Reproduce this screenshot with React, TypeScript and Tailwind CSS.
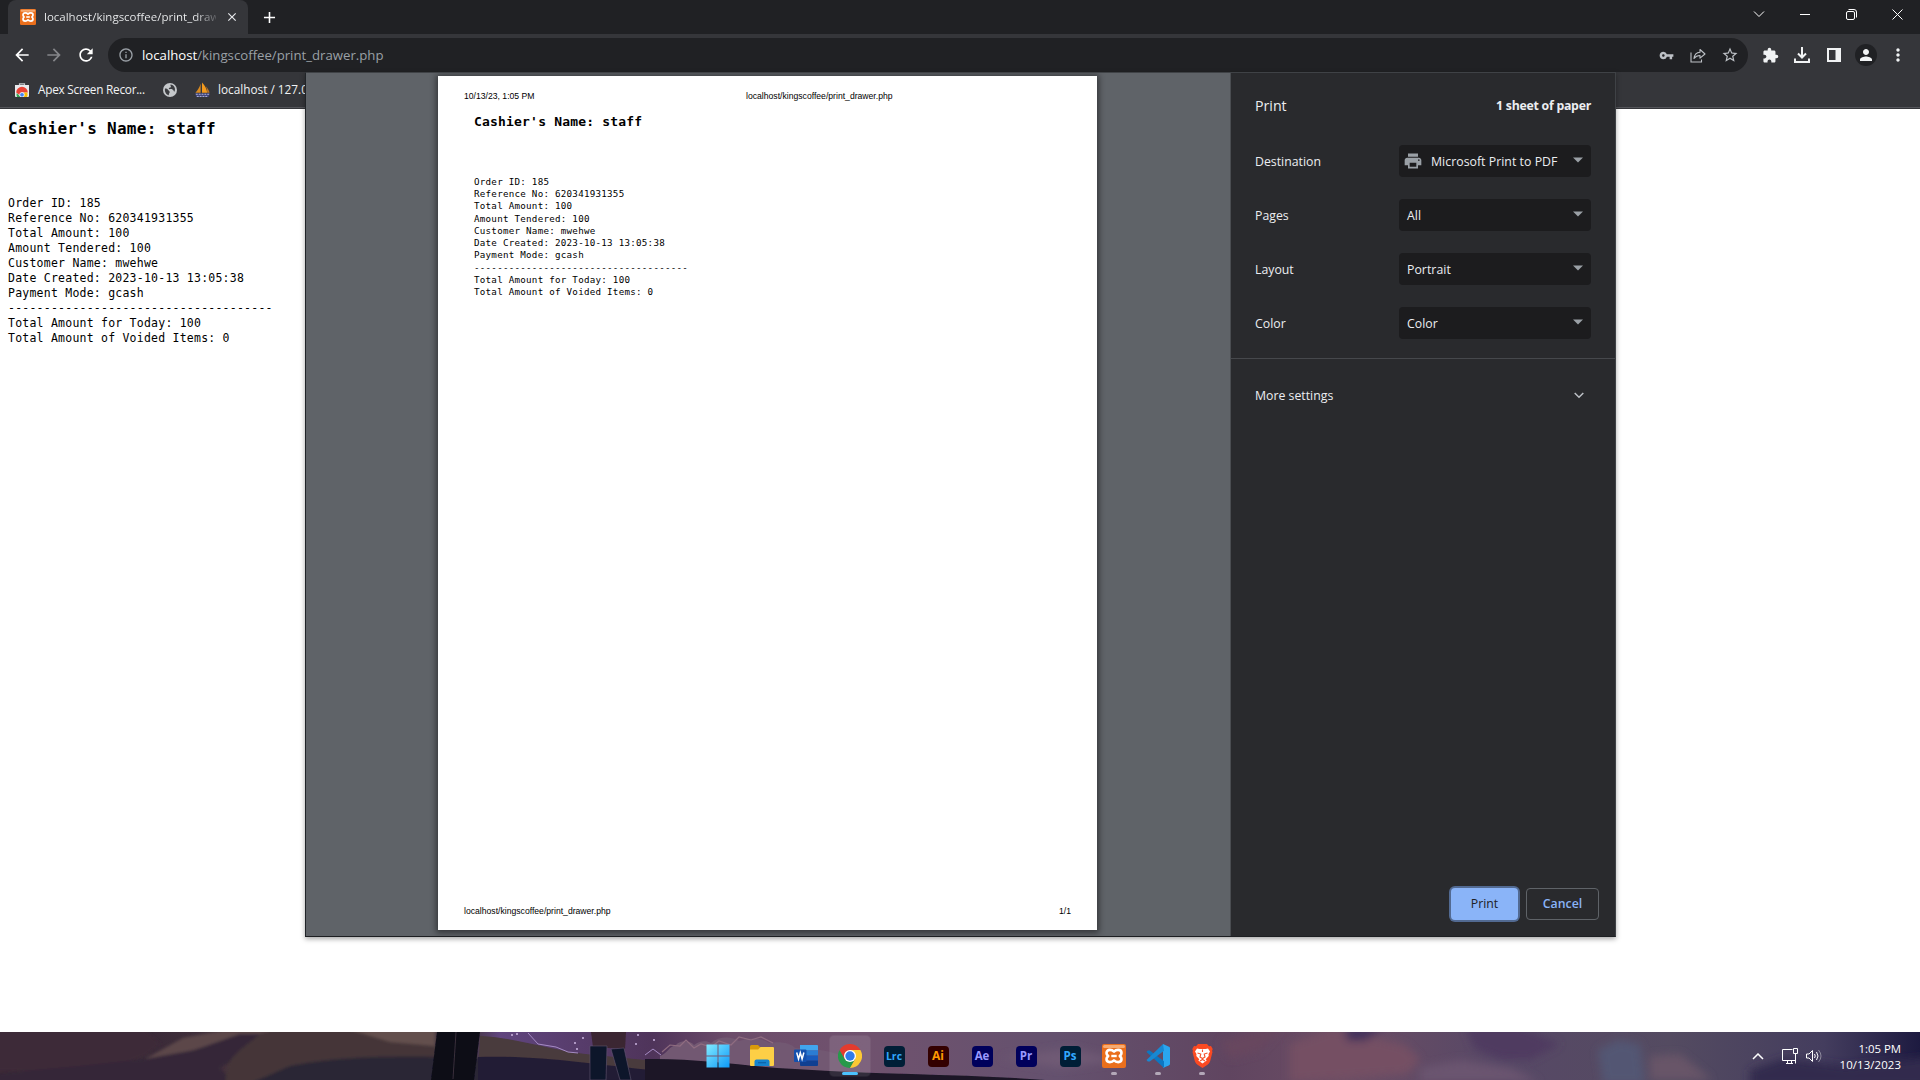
import React from "react";
import {
  MdArrowBack,
  MdArrowForward,
  MdRefresh,
  MdInfoOutline,
  MdVpnKey,
  MdStarBorder,
  MdExtension,
  MdPerson,
  MdMoreVert,
  MdPrint,
  MdAdd,
  MdClose,
  MdExpandMore,
} from "react-icons/md";

const receipt = [
  "Order ID: 185",
  "Reference No: 620341931355",
  "Total Amount: 100",
  "Amount Tendered: 100",
  "Customer Name: mwehwe",
  "Date Created: 2023-10-13 13:05:38",
  "Payment Mode: gcash",
  "-------------------------------------",
  "Total Amount for Today: 100",
  "Total Amount of Voided Items: 0",
];

function XamppIcon({ size }: { size: number }) {
  return (
    <svg width={size} height={size} viewBox="0 0 24 24">
      <rect width="24" height="24" rx="2" fill="#ea6f1c" />
      <rect x="1" y="1" width="22" height="3" rx="1.5" fill="#f6ab72" />
      <path
        d="M12 7.600C10.800 6.300 9.600 5.900 7.800 5.900 5.800 5.900 4.500 7 4.500 8.900c0 1.600.9 2.300 1.700 3.100-.8.8-1.700 1.500-1.700 3.100 0 1.900 1.300 3 3.300 3 1.800 0 3-.4 4.200-1.700 1.200 1.300 2.400 1.700 4.200 1.700 2 0 3.300-1.100 3.300-3 0-1.600-.9-2.300-1.700-3.100.8-.8 1.700-1.500 1.700-3.100 0-1.900-1.300-3-3.300-3-1.800 0-3 .4-4.200 1.700Z"
        fill="none"
        stroke="#fff"
        strokeWidth="2.600"
        strokeLinejoin="round"
      />
      <path d="M9.300 12h5.400" stroke="#fff" strokeWidth="2.400" />
    </svg>
  );
}

function TabStrip() {
  return (
    <div className="flex h-[34px] items-stretch bg-[#202124]">
      <div className="relative ml-2 flex w-[240px] items-center rounded-t-lg bg-[#35363a] pl-3 pr-2">
        <XamppIcon size={16} />
        <div className="ml-2 w-[172px] whitespace-nowrap bg-gradient-to-r from-[#f1f3f4] from-88% to-[#5a5b5f] bg-clip-text text-[11.500px] text-transparent">
          localhost/kingscoffee/print_draw
        </div>
        <MdClose className="ml-[9px]" color="#e8eaed" size={14} />
      </div>
      <div className="flex w-[43px] items-center justify-center">
        <MdAdd size={19} color="#fff" />
      </div>
      <div className="ml-auto flex h-7 items-center text-white">
        <div className="flex w-[46px] justify-center">
          <svg width="12" height="8" viewBox="0 0 12 8">
            <path d="M1 1.500l5 5 5-5" fill="none" stroke="currentColor" />
          </svg>
        </div>
        <div className="flex w-[46px] justify-center">
          <span className="h-px w-[10px] bg-white" />
        </div>
        <div className="flex w-[46px] justify-center">
          <svg width="11" height="11" viewBox="0 0 11 11" fill="none" stroke="currentColor">
            <rect x=".5" y="2.500" width="8" height="8" rx="1.500" />
            <path d="M2.500.5h5.500a2.500 2.500 0 0 1 2.500 2.500v5.500" />
          </svg>
        </div>
        <div className="flex w-[46px] justify-center">
          <svg width="11" height="11" viewBox="0 0 11 11" stroke="currentColor">
            <path d="M.5.5l10 10M10.500.5l-10 10" />
          </svg>
        </div>
      </div>
    </div>
  );
}

function Slot({ children }: { children: React.ReactNode }) {
  return <div className="flex w-8 shrink-0 items-center justify-center">{children}</div>;
}

function Toolbar() {
  return (
    <div className="flex h-[38px] items-end px-1.5">
      <div className="flex h-[34px] items-center text-white">
        <Slot>
          <MdArrowBack size={20} />
        </Slot>
        <Slot>
          <MdArrowForward size={20} color="#85868a" />
        </Slot>
        <Slot>
          <MdRefresh size={20} />
        </Slot>
      </div>
      <div className="ml-1.5 flex h-[34px] w-[1640px] items-center rounded-full bg-[#202124] pl-2.5 pr-0.5 text-[#bdc1c6]">
        <MdInfoOutline size={16} color="#9aa0a6" />
        <div className="ml-2 flex-1 pt-px text-[13.200px] text-[#9aa0a6]">
          <span className="text-white">localhost</span>/kingscoffee/print_drawer.php
        </div>
        <Slot>
          <MdVpnKey size={15} />
        </Slot>
        <Slot>
          <svg width="16" height="15" viewBox="0 0 16 15" fill="none" stroke="currentColor" strokeWidth="1.100">
            <path d="M1 4.500V14h10.500v-2.500" />
            <path d="M4 10.500C4.500 6.500 6.500 4.500 10 4.300V1.500L15 6l-5 4.200V7.500C7.500 7.500 5.500 8.500 4 10.500Z" strokeLinejoin="round" />
          </svg>
        </Slot>
        <Slot>
          <MdStarBorder size={18} />
        </Slot>
      </div>
      <div className="ml-1.5 flex h-[34px] items-center text-[#f1f3f4]">
        <Slot>
          <MdExtension size={17} />
        </Slot>
        <Slot>
          <svg width="16" height="16" viewBox="0 0 16 16" fill="none" stroke="currentColor" strokeWidth="2">
            <path d="M8 0v10M4 6.500l4 4 4-4M1 11.500V15h14v-3.500" />
          </svg>
        </Slot>
        <Slot>
          <svg width="14" height="14" viewBox="0 0 14 14">
            <path d="M1 1h12v12H1z" fill="none" stroke="currentColor" strokeWidth="2" />
            <path d="M8.500 0H14v14H8.500z" fill="currentColor" />
          </svg>
        </Slot>
        <Slot>
          <div className="flex size-[22px] items-center justify-center rounded-full bg-[#202124]">
            <MdPerson size={18} />
          </div>
        </Slot>
        <Slot>
          <MdMoreVert size={20} />
        </Slot>
      </div>
    </div>
  );
}

function Bookmarks() {
  return (
    <div className="flex h-[36px] items-center border-b border-[#54555a] pl-[15px] text-[11.800px] text-[#f1f3f4]">
      <svg width="14" height="14" viewBox="0 0 14 14">
        <path d="M4.500 3V.8h5V3" fill="none" stroke="#c4c7ca" strokeWidth="1.200" />
        <path d="M0 2h14v11a1 1 0 0 1-1 1H1a1 1 0 0 1-1-1z" fill="#e8eaed" />
        <path d="M2 14a5.500 5.500 0 0 1-.2-4l4 4z" fill="#34a853" />
        <path d="M1.200 9.500A5.800 5.800 0 0 1 12.800 9.500H7L4.700 12z" fill="#ea4335" />
        <path d="M12.300 9.500a6 6 0 0 1-.3 4.500H7l2.400-4.500z" fill="#fbbc04" />
        <circle cx="7" cy="11.800" r="2.300" fill="#4285f4" stroke="#fff" strokeWidth=".8" />
      </svg>
      <span className="ml-[9px] w-[110px] whitespace-nowrap pt-px tracking-[-0.250px]">Apex Screen Recor...</span>
      <svg className="ml-[15px]" width="14" height="14" viewBox="0 0 14 14">
        <circle cx="7" cy="7" r="7" fill="#c4c7ca" />
        <path d="M2 5.500c1.500 0 2.500.3 3.200 1.500.6 1 1.500 1 1.500 2s-1 1.200-.9 3.200C3.500 12 1.300 9 2 5.500z" fill="#3c3d41" />
        <path d="M7.500 1.500c-.5 1.500 1 1.800.3 2.800-.8.700-2 .3-2 1.500 1.200.8 3 .2 4.200 1 .8.700.5 1.700 1.500 1.900C13 5 11 2 7.500 1.500z" fill="#3c3d41" />
      </svg>
      <svg className="ml-[17px]" width="17" height="16" viewBox="0 0 18 16">
        <path d="M7 1v10H1.500C4 8 6 5 7 1z" fill="#d98a21" />
        <path d="M8.500 0c3 3 5 7 5.500 11H8.500z" fill="#f39a1d" />
        <path d="M12.500 4c2 2 3.500 4.500 4 7H14c0-2-.5-5-1.500-7z" fill="#b9752a" />
        <path d="M1 11.500h16l-1.500 4H2.500z" fill="#3d4276" />
        <path d="M2 12.500h14M3 14.800h12" stroke="#b8bbe0" strokeWidth="1" strokeDasharray="2 1" />
      </svg>
      <span className="ml-[7px] whitespace-nowrap pt-px">localhost / 127.0</span>
    </div>
  );
}

const options = [
  { label: "Destination", value: "Microsoft Print to PDF", printer: true },
  { label: "Pages", value: "All", printer: false },
  { label: "Layout", value: "Portrait", printer: false },
  { label: "Color", value: "Color", printer: false },
];

function PrintDialog() {
  return (
    <div className="absolute left-[305px] top-[72px] flex h-[865px] w-[1311px] border border-[#3f4246] border-b-[#1d1f22] border-l-[#202428] bg-[#292a2d] shadow-[0_2px_5px_rgba(0,0,0,0.35)]">
      <div className="w-[925px] overflow-hidden border-r border-[#4a4d51] bg-[#5f6368] pl-[132px] pt-[3px]">
        <div className="flex h-[854px] w-[659px] flex-col bg-white px-[26px] text-black shadow-[0_1px_6px_2px_rgba(0,0,0,0.45)]">
          <div className="mt-[15px] flex h-[10px] items-center whitespace-nowrap font-['Liberation_Sans'] text-[8.650px] leading-[10px]">
            <span className="w-[282px]">10/13/23, 1:05 PM</span>
            <span>localhost/kingscoffee/print_drawer.php</span>
          </div>
          <div className="pl-[10px] font-['DejaVu_Sans_Mono']">
            <div className="mt-[13px] h-[16px] text-[13px] font-bold leading-[16px] tracking-[0.190px]">
              Cashier&apos;s Name: staff
            </div>
            <div className="mt-[46px] whitespace-pre text-[9.200px] leading-[12.220px] tracking-[0.255px]">
              {receipt.map((line) => (
                <div key={line}>{line}</div>
              ))}
            </div>
          </div>
          <div className="mb-[14px] mt-auto flex h-[10px] items-center justify-between font-['Liberation_Sans'] text-[8.650px] leading-[10px]">
            <span>localhost/kingscoffee/print_drawer.php</span>
            <span>1/1</span>
          </div>
        </div>
      </div>
      <div className="flex w-[384px] flex-col text-[12.300px] text-[#eceef1]">
        <div className="flex h-[61px] items-center justify-between px-6 pt-[5px]">
          <span className="text-[14.200px]">Print</span>
          <span className="font-bold tracking-[-0.250px]">1 sheet of paper</span>
        </div>
        {options.map((o) => (
          <div key={o.label} className="flex h-[54px] items-center justify-between px-6">
            <span className="pt-[2px]">{o.label}</span>
            <div className="flex h-8 w-[192px] items-center rounded bg-[#1c1c1e] pl-2 pr-2">
              {o.printer && <MdPrint className="-ml-1 mr-2 shrink-0" size={20} color="#9aa0a6" />}
              <span className="whitespace-nowrap pt-[2px] tracking-[0.030px]">{o.value}</span>
              <svg className="mb-[2px] ml-auto shrink-0" width="10" height="6" viewBox="0 0 10 6">
                <path d="M0 .5h10L5 5.500z" fill="#9aa0a6" />
              </svg>
            </div>
          </div>
        ))}
        <div className="mt-[8px] flex h-[73px] items-center justify-between border-t border-[#46484c] px-6">
          <span className="pt-[2px]">More settings</span>
          <svg className="mr-[7px]" width="10" height="7" viewBox="0 0 10 7">
            <path d="M.7 1l4.300 4.300L9.300 1" fill="none" stroke="#bdc1c6" strokeWidth="1.500" />
          </svg>
        </div>
        <div className="mb-4 mr-4 mt-auto flex justify-end gap-2">
          <div className="flex h-8 w-[67px] items-center justify-center rounded bg-[#8ab4f8] pt-px font-medium text-[#202124] ring-2 ring-[#526a92]">
            Print
          </div>
          <div className="flex h-8 w-[73px] items-center justify-center rounded border border-[#5f6368] pt-px font-semibold text-[#8ab4f8]">
            Cancel
          </div>
        </div>
      </div>
    </div>
  );
}

function Wallpaper() {
  return (
    <svg className="absolute inset-0" width="1920" height="48" viewBox="0 0 1920 48">
      <defs>
        <linearGradient id="sky" x1="0" x2="1920" y1="0" y2="0" gradientUnits="userSpaceOnUse">
          <stop offset="0" stopColor="#3b2734" />
          <stop offset=".08" stopColor="#3a2a38" />
          <stop offset=".15" stopColor="#4b383e" />
          <stop offset=".245" stopColor="#43363e" />
          <stop offset=".26" stopColor="#60457e" />
          <stop offset=".34" stopColor="#4f345a" />
          <stop offset=".38" stopColor="#6c4c6a" />
          <stop offset=".45" stopColor="#70526e" />
          <stop offset=".55" stopColor="#64516e" />
          <stop offset=".64" stopColor="#604560" />
          <stop offset=".7" stopColor="#6b4d64" />
          <stop offset=".78" stopColor="#574866" />
          <stop offset=".87" stopColor="#544b61" />
          <stop offset=".95" stopColor="#443d5e" />
          <stop offset="1" stopColor="#1d1a40" />
        </linearGradient>
        <filter id="soft" x="-20%" y="-80%" width="140%" height="260%">
          <feGaussianBlur stdDeviation="4" />
        </filter>
        <filter id="hills" x="-5%" y="-20%" width="110%" height="140%">
          <feGaussianBlur stdDeviation="1.800" />
        </filter>
        <filter id="fine" x="-5%" y="-20%" width="110%" height="140%">
          <feGaussianBlur stdDeviation=".6" />
        </filter>
      </defs>
      <rect width="1920" height="48" fill="url(#sky)" />
      <g filter="url(#hills)">
        <path d="M-10-10H135l26 22-16 12-45 15H-10z" fill="#3d2938" />
        <path d="M145 27l38-21 42-8h50L200 16l-30 10z" fill="#5c474a" />
        <path d="M145 27l50-9 45-16h40l-35 18-25 16 20 22H-10v-16l90-8z" fill="#342737" />
        <path d="M262 1c35-8 75-8 95-4l80 18v40H225c3-26 0-27 37-54z" fill="#453639" />
        <path d="M345-4h90v18l-45-4z" fill="#64504d" />
        <path d="M290 34c80-16 190-10 420 6v20H230z" fill="#2a2535" />
      </g>
      <g filter="url(#fine)">
        <path d="M480 4c35 1 75 16 115 19l80 8v12H478z" fill="#493a3d" />
        <path d="M478 25c60-2 110 7 182 14v9H478z" fill="#241e36" />
        <path d="M528 1l10 11 18 3 12 5 10 1M645 23l8-6 8 6" stroke="#a58bc4" strokeWidth="1" fill="none" />
        <g fill="#cbb5df">
          <circle cx="512" cy="3" r="1" />
          <circle cx="517" cy="2" r="1" />
          <circle cx="575" cy="11" r="1" />
          <circle cx="583" cy="6" r="1" />
          <circle cx="638" cy="3" r="1" />
          <circle cx="636" cy="12" r="1" />
          <circle cx="654" cy="8" r="1" />
          <circle cx="577" cy="17" r="1" />
        </g>
        <path d="M437 0h43l-6 48h-43z" fill="#0c0b18" />
        <path d="M456 0l-3 47" stroke="#39303a" />
        <path d="M591 0h35l-1 17-32-2z" fill="#3b2530" />
        <path d="M590 14h17l-1 34h-16zM611 17l13-1 7 32h-11z" fill="#10132a" stroke="#5f5870" strokeWidth=".6" />
        <path d="M660 24c8-3 8-9 16-11 4-5 14-5 18 0 5-4 12-5 17-2 8-7 20-7 28-2 12-4 22-3 30 2 10-2 22 0 26 5 22 0 45 4 65 16v13H660z" fill="#725872" />
        <path d="M662 20l8-7 10 1 6-6 8 8 7-4 10 3 8-6 12 4 8-8 12 3 10-3 12 6" stroke="#8f6c80" strokeWidth="1.200" fill="none" />
        <path d="M645 27c55-1 95 7 150 10 90 6 170 5 250 11H645z" fill="#1a1525" />
      </g>
      <g filter="url(#soft)">
        <path d="M1290 12l40-15 50 10 25 6 15 14-12 15-118 8z" fill="#745064" />
        <path d="M1345-5h40l-20 14h-18z" fill="#43335c" />
        <path d="M1465-5h55l40 17-30 16-30-1-25-10z" fill="#4f3b60" />
        <path d="M1598 18l20-10 22 4 5 40h-42z" fill="#525773" />
        <path d="M1650 24l30-2 32 26h-62z" fill="#685567" />
        <path d="M1750 38l35-12 60 8 85-9v30h-180z" fill="#302a4e" />
        <path d="M1000 26l70-10 50 12-60 8z" fill="#6f5a75" />
        <path d="M1220 10l40-13h20l-20 22-30 8z" fill="#68475f" />
        <path d="M1420 36l40-8 50 8 30 14h-120z" fill="#6a5470" />
      </g>
    </svg>
  );
}

function TaskSlot({ children, active, dot }: { children: React.ReactNode; active?: boolean; dot?: boolean }) {
  return (
    <div className="relative flex w-11 items-center justify-center">
      {active && <span className="absolute inset-x-[2px] inset-y-1 rounded bg-white/10 ring-1 ring-white/5" />}
      <span className="relative flex size-6 items-center justify-center">{children}</span>
      {active && <span className="absolute bottom-[5px] h-[3px] w-4 rounded-full bg-[#4cc2ff]" />}
      {dot && <span className="absolute bottom-[5px] h-[3px] w-1.5 rounded-full bg-[#b3a8b8]" />}
    </div>
  );
}

const adobe = [
  { t: "Lrc", c: "bg-[#001e36] text-[#31a8ff]", s: "text-[10.500px]" },
  { t: "Ai", c: "bg-[#330000] text-[#ff9a00]", s: "text-[12px]" },
  { t: "Ae", c: "bg-[#00005b] text-[#9999ff]", s: "text-[11.500px]" },
  { t: "Pr", c: "bg-[#00005b] text-[#9999ff]", s: "text-[11.500px]" },
  { t: "Ps", c: "bg-[#001e36] text-[#31a8ff]", s: "text-[11.500px]" },
];

function Taskbar() {
  return (
    <div className="relative flex h-12 items-stretch overflow-hidden bg-[#4c3a52]">
      <Wallpaper />
      <div className="relative ml-[696px] flex">
        <TaskSlot>
          <svg width="24" height="24" viewBox="0 0 24 24" className="shrink-0">
            <defs>
              <linearGradient id="win" x1="0" y1="0" x2="24" y2="24" gradientUnits="userSpaceOnUse">
                <stop offset="0" stopColor="#85ecff" />
                <stop offset="1" stopColor="#0a98f8" />
              </linearGradient>
            </defs>
            <path d="M.5.5h11v11H.5zM12.500.5h11v11h-11zM.5 12.500h11v11H.5zM12.500 12.500h11v11h-11z" fill="url(#win)" />
          </svg>
        </TaskSlot>
        <TaskSlot>
          <svg width="24" height="24" viewBox="0 0 24 24">
            <path d="M0 2.500A1.500 1.500 0 0 1 1.500 1H8l2.500 2.500L8 6H0z" fill="#d99a0c" />
            <path d="M0 5.500h8L10.500 3H23a1 1 0 0 1 1 1v17a1 1 0 0 1-1 1H1a1 1 0 0 1-1-1z" fill="#fdcf46" />
            <path d="M4.500 22v-4.500a2 2 0 0 1 2-2h11a2 2 0 0 1 2 2V22z" fill="#1583ce" />
            <path d="M8 18.700h8" stroke="#0d62a8" strokeWidth="1.200" />
          </svg>
        </TaskSlot>
        <TaskSlot>
          <svg width="24" height="24" viewBox="0 0 24 24">
            <path d="M6 1h17a1 1 0 0 1 1 1v4.500H6z" fill="#41a5ee" />
            <path d="M6 6.300h18v5.300H6z" fill="#2b7cd3" />
            <path d="M6 11.500h18v5.300H6z" fill="#185abd" />
            <path d="M6 16.500h18V21a1 1 0 0 1-1 1H7a1 1 0 0 1-1-1z" fill="#103f91" />
            <rect y="5.500" width="12.500" height="12.500" rx="1" fill="#1450ad" />
            <path d="M2.700 8.500l1.800 6.500 1.800-6.300L8.100 15l1.800-6.500" fill="none" stroke="#fff" strokeWidth="1.500" />
          </svg>
        </TaskSlot>
        <TaskSlot active>
          <svg width="24" height="24" viewBox="0 0 24 24">
            <path d="M1.600 6A12 12 0 0 0 12 24l5.200-9H12L6.800 15z" fill="#27994a" />
            <path d="M12 6h10.400A12 12 0 0 1 12 24l5.200-9z" fill="#fcc934" />
            <path d="M22.400 6A12 12 0 0 0 1.600 6l5.200 9L12 6z" fill="#e33b2e" />
            <circle cx="12" cy="12" r="6" fill="#fff" />
            <circle cx="12" cy="12" r="4.700" fill="#2f7bea" />
          </svg>
        </TaskSlot>
        {adobe.map((a) => (
          <TaskSlot key={a.t}>
            <span className={`flex size-[21px] shrink-0 items-center justify-center rounded-[4px] font-bold leading-none ${a.c} ${a.s}`}>
              {a.t}
            </span>
          </TaskSlot>
        ))}
        <TaskSlot dot>
          <XamppIcon size={24} />
        </TaskSlot>
        <TaskSlot dot>
          <svg width="24" height="24" viewBox="0 0 24 24">
            <path d="M17 0l6 2.800c.6.300 1 .8 1 1.500v15.400c0 .7-.4 1.200-1 1.500L17 24z" fill="#2aa5ee" />
            <path d="M1.800 6.500l2-.1L18 17.300V24L.5 8z" fill="#0c77c2" />
            <path d="M17 0l1 6.700L3.800 17.600l-2-.1L.5 16z" fill="#1888d2" />
          </svg>
        </TaskSlot>
        <TaskSlot dot>
          <svg width="21" height="24" viewBox="0 0 21 24">
            <path d="M6 0h9l2 2.200 2-.2 1.700 3-.7 2 .5 1-2.300 9c-.5 2-2 3.300-3.500 4.300L10.500 24l-4.200-2.700c-1.500-1-3-2.300-3.500-4.300L.5 8 1 7 .3 5 2 2l2 .2z" fill="#fb4a22" />
            <path d="M5 4.500l2.500.6h6l2.500-.6 2 3-1.500 2.500.2 2-3 3.200 1 1.200-4.200 3.100-4.200-3.100 1-1.200-3-3.200.2-2L3 7.500z" fill="#fff" />
            <path d="M5.500 9l3.300 1-.8 3 2.500 1.500L13 13l-.8-3 3.300-1M10.500 5.500V8M8 17l2.500-1.500L13 17" fill="none" stroke="#f4512c" strokeWidth="1.100" />
          </svg>
        </TaskSlot>
      </div>
      <div className="relative ml-auto flex items-center pr-[19px] text-white">
        <svg width="12" height="7" viewBox="0 0 12 7" fill="none" stroke="currentColor" strokeWidth="1.500">
          <path d="M1 6l5-5 5 5" />
        </svg>
        <svg className="ml-[18px]" width="17" height="17" viewBox="0 0 17 17" fill="none" stroke="currentColor">
          <path d="M10.500 1.500h-10v11h13V8M4 15.500h7M5.500 12.500v3M9.500 12.500v3" />
          <path d="M11.500.5h4v5h-4zM13.500 5.500v10" />
        </svg>
        <svg className="ml-[7px]" width="16" height="14" viewBox="0 0 16 14" fill="none" stroke="currentColor">
          <path d="M.5 5h2.500l3.500-3.500v11L3 9H.5zM8.500 5q1.500 2 0 4M10.500 3q3 4 0 8" />
          <path d="M12.500 1q5 6 0 12" opacity=".4" />
        </svg>
        <div className="ml-[15px] w-[64px] whitespace-nowrap pt-px text-right text-[11.400px] leading-4">
          <div>1:05 PM</div>
          <div className="tracking-[0.100px]">10/13/2023</div>
        </div>
      </div>
    </div>
  );
}

export default function App() {
  return (
    <div className="relative flex h-[1080px] w-[1920px] flex-col overflow-hidden bg-white font-['Open_Sans',sans-serif]">
      <header className="h-[109px] bg-[#35363a]">
        <TabStrip />
        <Toolbar />
        <Bookmarks />
      </header>
      <main className="flex-1 whitespace-pre pl-2 font-['DejaVu_Sans_Mono',monospace] text-black">
        <h3 className="mt-[9px] h-[22px] text-[16px] font-bold leading-[22px] tracking-[0.270px]">Cashier&apos;s Name: staff</h3>
        <div className="mt-[56px] text-[11.500px] leading-[15px] tracking-[0.230px]">
          {receipt.map((line) => (
            <div key={line}>{line}</div>
          ))}
        </div>
      </main>
      <PrintDialog />
      <Taskbar />
    </div>
  );
}
